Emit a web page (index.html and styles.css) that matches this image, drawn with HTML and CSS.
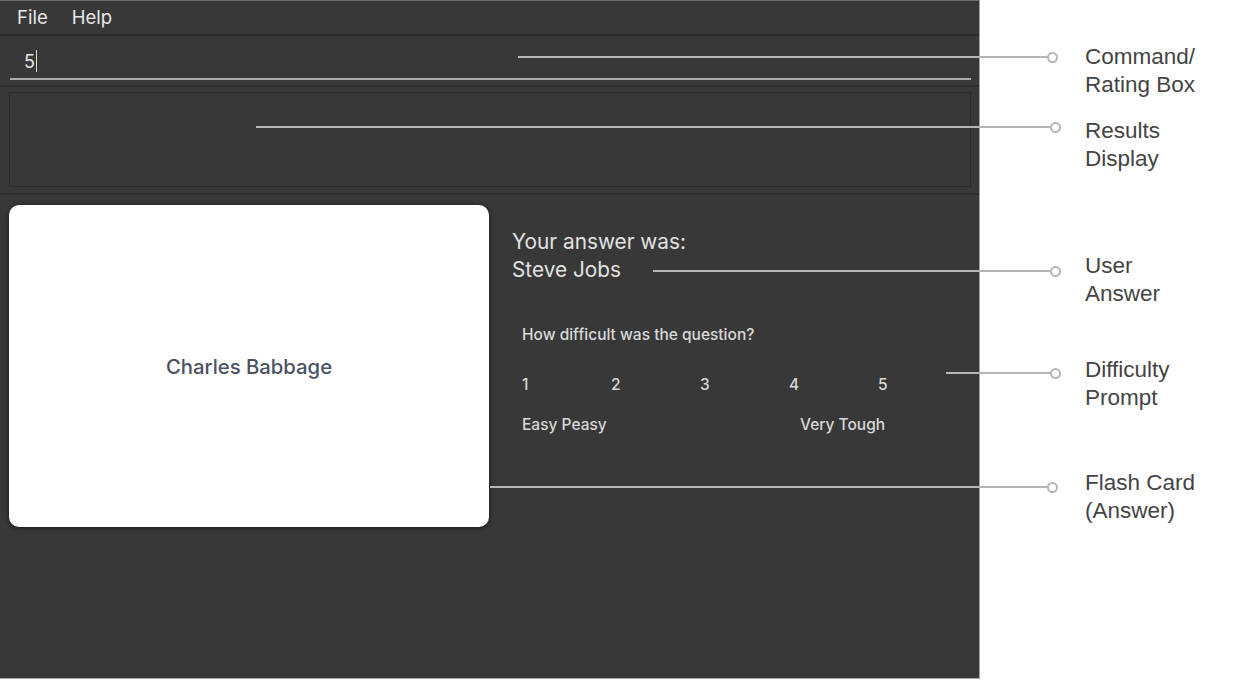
FILE: index.html
```html
<!DOCTYPE html>
<html lang="en">
<head>
<meta charset="utf-8">
<title>Flash Card Review</title>
<link rel="stylesheet" href="styles.css">
</head>
<body>
<div class="page">
  <div class="app">
    <div class="menubar">
      <span class="menu-item">File</span>
      <span class="menu-item">Help</span>
    </div>
    <div class="command">
      <div class="field"><span class="value">5</span><span class="caret"></span></div>
    </div>
    <div class="results">
      <div class="results-box"></div>
    </div>
    <div class="main">
      <div class="card"><span class="card-text">Charles Babbage</span></div>
      <div class="side">
        <div class="answer">
          <div>Your answer was:</div>
          <div>Steve Jobs</div>
        </div>
        <div class="rating">
          <div class="prompt">How difficult was the question?</div>
          <div class="scale">
            <span>1</span><span>2</span><span>3</span><span>4</span><span>5</span>
          </div>
          <div class="scale-labels">
            <span>Easy Peasy</span><span>Very Tough</span>
          </div>
        </div>
      </div>
    </div>
  </div>

  <div class="callout c1"><span class="wire"></span><span class="dot"></span></div>
  <div class="callout c2"><span class="wire"></span><span class="dot"></span></div>
  <div class="callout c3"><span class="wire"></span><span class="dot"></span></div>
  <div class="callout c4"><span class="wire"></span><span class="dot"></span></div>
  <div class="callout c5"><span class="wire"></span><span class="dot"></span></div>

  <div class="note n1">Command/<br>Rating Box</div>
  <div class="note n2">Results<br>Display</div>
  <div class="note n3">User<br>Answer</div>
  <div class="note n4">Difficulty<br>Prompt</div>
  <div class="note n5">Flash Card<br>(Answer)</div>
</div>
</body>
</html>
```

FILE: styles.css
```css
* { box-sizing: border-box; }

html, body {
  margin: 0;
  padding: 0;
  background: #ffffff;
  width: 1233px;
  height: 681px;
  overflow: hidden;
}

.page {
  position: relative;
  width: 1233px;
  height: 681px;
  display: flex;
  font-family: Inter, "Liberation Sans", sans-serif;
}

/* ---------- app window ---------- */
.app {
  width: 980px;
  height: 679px;
  background: #383838;
  border-top: 1px solid #6e6e6e;
  border-right: 1px solid #a0a0a0;
  border-bottom: 1px solid #a8a8a8;
  display: flex;
  flex-direction: column;
}

.menubar {
  height: 35px;
  border-bottom: 2px solid #2d2d2d;
  display: flex;
  align-items: center;
  gap: 24px;
  padding-left: 17px;
  padding-bottom: 2px;
  color: #e8e8e8;
  font-size: 18.5px;
}

.command {
  height: 51px;
  border-bottom: 2px solid #2d2d2d;
  padding: 6px 8px 5px 10px;
}

.field {
  height: 38px;
  border-bottom: 2px solid #ababab;
  padding-left: 14px;
  padding-top: 2px;
  display: flex;
  align-items: center;
  color: #e6e6e6;
  font-size: 18px;
}

.caret {
  display: inline-block;
  width: 1px;
  height: 22px;
  background: #d8d8d8;
  margin-left: 1px;
}

.results {
  height: 108px;
  border-bottom: 2px solid #2d2d2d;
  padding: 5px 8px 6px 9px;
}

.results-box {
  height: 95px;
  border: 1px solid #2b2b2b;
}

.main {
  flex: 1;
  display: flex;
  gap: 23px;
  padding: 10px 9px;
}

.card {
  width: 480px;
  height: 322px;
  background: #ffffff;
  border-radius: 10px;
  box-shadow: 0 1px 5px rgba(0, 0, 0, 0.55);
  display: flex;
  align-items: center;
  justify-content: center;
}

.card-text {
  color: #4a5261;
  font-size: 20.3px;
  font-weight: 500;
}

.side {
  display: flex;
  flex-direction: column;
  color: #dedede;
}

.answer {
  margin-top: 23px;
  font-size: 20.8px;
  line-height: 28px;
  color: #e2e2e2;
}

.rating {
  margin-top: 41px;
  padding-left: 10px;
  font-size: 15.5px;
  line-height: 20px;
  font-weight: 500;
  color: #d8d8d8;
}

.scale {
  margin-top: 30px;
  display: grid;
  grid-template-columns: repeat(5, 89px);
}

.scale-labels {
  margin-top: 20px;
  display: grid;
  grid-template-columns: 278px auto;
}

/* ---------- annotation overlays ---------- */
.callout {
  position: absolute;
  display: flex;
  align-items: center;
  height: 12px;
}

.wire {
  flex: 1;
  height: 2px;
  background: #b6b6b6;
}

.dot {
  width: 11px;
  height: 11px;
  border: 2px solid #b6b6b6;
  border-radius: 50%;
  background: #ffffff;
  margin-left: -1px;
}

.c1 { left: 518px; top: 51px;  width: 540px; }
.c2 { left: 256px; top: 121px; width: 805px; }
.c3 { left: 653px; top: 265px; width: 408px; }
.c4 { left: 946px; top: 367px; width: 115px; }
.c5 { left: 490px; top: 481px; width: 568px; }

.note {
  position: absolute;
  left: 1085px;
  font-family: "Liberation Sans", Arial, sans-serif;
  font-size: 22.5px;
  line-height: 28px;
  color: #444444;
}

.n1 { top: 43px; }
.n2 { top: 117px; }
.n3 { top: 252px; }
.n4 { top: 356px; }
.n5 { top: 469px; }
```
